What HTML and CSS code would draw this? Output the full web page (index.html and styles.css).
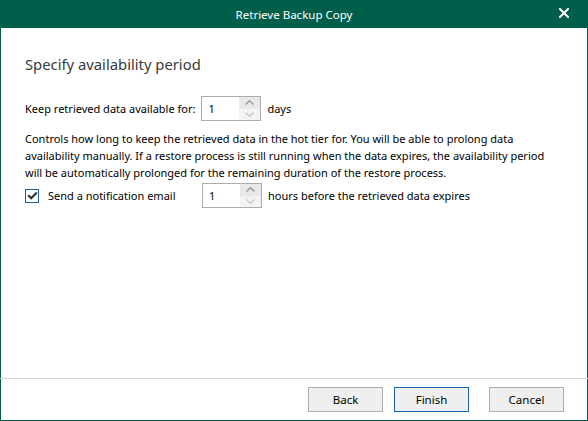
FILE: index.html
```html
<!DOCTYPE html>
<html>
<head>
<meta charset="utf-8">
<link rel="stylesheet" href="styles.css">
</head>
<body>
<div class="window">
  <div class="titlebar">
    <span class="title">Retrieve Backup Copy</span>
    <svg class="close" width="10" height="10" viewBox="0 0 10 10"><path d="M1 1L9 9M9 1L1 9" stroke="#fff" stroke-width="2" stroke-linecap="square"/></svg>
  </div>
  <div class="content">
    <h1 class="heading">Specify availability period</h1>
    <div class="row row-keep">
      <span class="label">Keep retrieved data available for:</span>
      <div class="spin">
        <span class="spin-value">1</span>
        <div class="spin-btns">
          <span class="spin-up"><svg width="9" height="5" viewBox="0 0 9 5"><path d="M0.5 4.5L4.5 0.8L8.5 4.5" fill="none" stroke="#9a9a9a" stroke-width="1.5"/></svg></span>
          <span class="spin-down"><svg width="9" height="5" viewBox="0 0 9 5"><path d="M0.5 0.5L4.5 4.2L8.5 0.5" fill="none" stroke="#c9c9c9" stroke-width="1.5"/></svg></span>
        </div>
      </div>
      <span class="unit">days</span>
    </div>
    <p class="desc">Controls how long to keep the retrieved data in the hot tier for. You will be able to prolong data availability manually. If a restore process is still running when the data expires, the availability period will be automatically prolonged for the remaining duration of the restore process.</p>
    <div class="row row-notify">
      <span class="check"><svg width="11" height="9" viewBox="0 0 11 9"><path d="M1.2 4.2L4.2 7.2L9.8 1.4" fill="none" stroke="#333" stroke-width="2.2"/></svg></span>
      <span class="label check-label">Send a notification email</span>
      <div class="spin">
        <span class="spin-value">1</span>
        <div class="spin-btns">
          <span class="spin-up"><svg width="9" height="5" viewBox="0 0 9 5"><path d="M0.5 4.5L4.5 0.8L8.5 4.5" fill="none" stroke="#9a9a9a" stroke-width="1.5"/></svg></span>
          <span class="spin-down"><svg width="9" height="5" viewBox="0 0 9 5"><path d="M0.5 0.5L4.5 4.2L8.5 0.5" fill="none" stroke="#c9c9c9" stroke-width="1.5"/></svg></span>
        </div>
      </div>
      <span class="unit">hours before the retrieved data expires</span>
    </div>
  </div>
  <div class="footer">
    <button class="btn">Back</button>
    <button class="btn btn-default">Finish</button>
    <button class="btn btn-cancel">Cancel</button>
  </div>
</div>
</body>
</html>
```
FILE: styles.css
```css
* { box-sizing: border-box; }
html, body { margin: 0; padding: 0; }
body {
  width: 588px;
  height: 421px;
  font-family: "Noto Sans", "Open Sans", sans-serif;
  font-size: 11px;
  color: #000;
  background: #fff;
}
.window {
  width: 588px;
  height: 421px;
  display: flex;
  flex-direction: column;
  border: 1px solid #005f4b;
  border-top: none;
}
.titlebar {
  height: 28px;
  margin: 0 -1px;
  background: #005f4b;
  color: #fff;
  display: flex;
  align-items: center;
  justify-content: center;
  position: relative;
  flex: none;
}
.title { font-size: 11.5px; }
.close { position: absolute; right: 19px; top: 8px; }
.content {
  flex: 1;
  padding: 26px 32px 0 24px;
}
.heading {
  margin: 0 0 22px 0;
  font-size: 14.8px;
  font-weight: 400;
  color: #3a3a3a;
  line-height: 20px;
}
.row { display: flex; align-items: center; }
.label { line-height: 16px; }
.spin {
  margin-left: 6px;
  width: 60px;
  height: 25px;
  border: 1px solid #acacac;
  display: flex;
  background: #fff;
}
.spin-value { flex: 1; padding-left: 6px; line-height: 23px; }
.spin-btns { width: 21px; display: flex; flex-direction: column; }
.spin-up, .spin-down { flex: 1; display: flex; align-items: center; justify-content: center; }
.spin-up { background: #e8e8e8; }
.spin-down { background: #f3f3f3; }
.unit { margin-left: 6px; }
.desc {
  margin: 9px 0 2px 0;
  line-height: 17px;
}
.check {
  width: 14px;
  height: 14px;
  border: 1px solid #1a5ea0;
  display: flex;
  align-items: center;
  justify-content: center;
  margin-right: 9px;
}
.check-label { width: 154px; }
.row-notify .spin { margin-left: 0; }
.footer {
  height: 42px;
  flex: none;
  border-top: 1px solid #d4d4d4;
  margin: 0 -1px;
  padding: 8px 24px 0 0;
  display: flex;
  justify-content: flex-end;
  align-items: flex-start;
}
.btn {
  width: 75px;
  height: 25px;
  border: 1px solid #adadad;
  background: #efefef;
  font-family: inherit;
  font-size: 11.5px;
  color: #000;
  padding: 0;
  margin-left: 11px;
}
.btn-default { border-color: #1766ab; }
.btn-cancel { margin-left: 20px; }
```
